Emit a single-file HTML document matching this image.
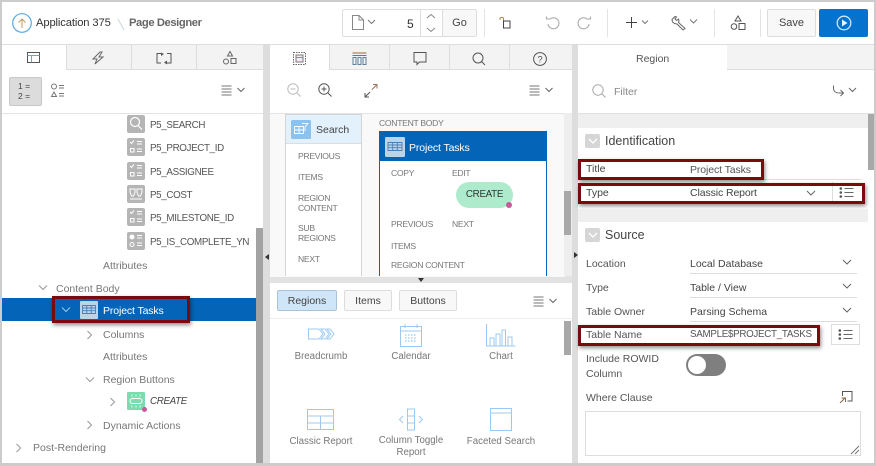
<!DOCTYPE html>
<html><head><meta charset="utf-8"><style>
html,body{margin:0;padding:0;background:#fff}
#r{position:relative;width:876px;height:466px;overflow:hidden;background:#fff;font-family:"Liberation Sans",sans-serif;font-size:10.5px;color:#555}
.a{position:absolute}
.t{position:absolute;white-space:nowrap;line-height:14px}
.box{position:absolute;border:3px solid #7b0a0f;box-shadow:1px 2px 4px rgba(0,0,0,.45);box-sizing:border-box}
svg{position:absolute;overflow:visible}
.g{color:#777}
.p{font-size:9.8px;letter-spacing:-.35px}
.s{font-size:8.6px;letter-spacing:-.3px}
.l{font-size:9.7px;text-align:center;width:102px}
.ul{position:absolute;height:1px;background:#ddd}
.btn{position:absolute;box-sizing:border-box;border:1px solid #ddd;background:#f8f8f8;border-radius:2px;text-align:center;color:#444;font-size:11px}
</style></head><body><div id="r">
<!-- panel backgrounds -->
<div class="a" style="left:0;top:0;width:876px;height:2px;background:#ccc"></div>
<div class="a" style="left:0;top:0;width:2px;height:466px;background:#ccc"></div>
<div class="a" style="left:874px;top:0;width:2px;height:466px;background:#ccc"></div>
<div class="a" style="left:0;top:463px;width:876px;height:3px;background:#ccc"></div>
<div class="a" style="left:2px;top:44px;width:872px;height:1px;background:#ddd"></div>
<!-- splitters -->
<div class="a" style="left:263px;top:45px;width:7px;height:418px;background:#ddd"></div>
<div class="a" style="left:572px;top:45px;width:6px;height:418px;background:#ddd"></div>
<div class="a" style="left:270px;top:276px;width:302px;height:7px;background:#e2e2e2"></div>
<div class="a" style="left:256px;top:228px;width:7px;height:235px;background:#a3a3a3"></div>
<div class="a" style="left:265px;top:254px;border:3px solid transparent;border-right:4px solid #333;border-left:0"></div>
<div class="a" style="left:574px;top:252px;border:3px solid transparent;border-left:4px solid #333;border-right:0"></div>
<div class="a" style="left:418px;top:278px;border:3px solid transparent;border-top:4px solid #333;border-bottom:0"></div>

<!-- header -->
<svg style="left:12px;top:13px" width="20" height="20"><circle cx="10" cy="10" r="9.3" fill="none" stroke="#5aa9e6" stroke-width="1.2"/><path d="M10 15V6M6.500 9.500L10 6l3.500 3.500" fill="none" stroke="#c29a5b" stroke-width="1"/></svg>
<div class="t" style="left:36px;top:16px;font-size:11.2px;color:#333;letter-spacing:-.12px">Application 375</div>
<svg style="left:117px;top:18px" width="8" height="14"><path d="M1 1l6 11" stroke="#c8d4dc" stroke-width="1"/></svg>
<div class="t" style="left:129px;top:16px;font-size:11.2px;color:#666;font-weight:bold;letter-spacing:-.4px">Page Designer</div>

<div class="a" style="left:342px;top:9px;width:101px;height:28px;box-sizing:border-box;border:1px solid #ddd;border-radius:2px 0 0 2px"></div>
<div class="a" style="left:420px;top:9px;width:1px;height:28px;background:#ddd"></div>
<svg style="left:351px;top:15px" width="30" height="16"><path d="M1.500 .5H8l4.500 4.500V14.500H1.500ZM8 .5V5h4.500" fill="none" stroke="#888" stroke-width="1"/><path d="M17 5l3.500 3.500L24 5" fill="none" stroke="#777" stroke-width="1"/></svg>
<div class="t" style="left:407px;top:17px;font-size:12px;color:#333">5</div>
<svg style="left:425px;top:13px" width="12" height="20"><path d="M2 5l4-3.500L10 5M2 15l4 3.500L10 15" fill="none" stroke="#888" stroke-width="1"/></svg>
<div class="btn" style="left:442px;top:9px;width:35px;height:28px;line-height:26px">Go</div>
<div class="a" style="left:484px;top:9px;width:1px;height:28px;background:#e4e4e4"></div>
<svg style="left:499px;top:16px" width="14" height="14"><path d="M1 4V2.500C1 1 4.500 1 4.500 2.500V5" fill="none" stroke="#b8864a" stroke-width="1"/><rect x="4.500" y="5" width="6.500" height="7" fill="none" stroke="#444" stroke-width="1"/></svg>
<svg style="left:545px;top:16px" width="15" height="15"><path d="M3 8a5.500 5.500 0 1 0 2-5H1.500M1.500 .5V3.500" fill="none" stroke="#aaa" stroke-width="1.100"/></svg>
<svg style="left:577px;top:16px" width="15" height="15"><path d="M12 8a5.500 5.500 0 1 1-2-5h3.500M13.500 .5V3.500" fill="none" stroke="#aaa" stroke-width="1.100"/></svg>
<div class="a" style="left:607px;top:9px;width:1px;height:28px;background:#e4e4e4"></div>
<svg style="left:625px;top:16px" width="28" height="14"><path d="M1 6.500H12M6.500 1V12" stroke="#444" stroke-width="1"/><path d="M17 4.500l3 3 3-3" fill="none" stroke="#777" stroke-width="1"/></svg>
<svg style="left:671px;top:15px" width="30" height="16"><path d="M1 4.500L4 1.500 5.500 2 4 4 5.500 5.500 7.500 4 8 6 7.500 7.500 14 13.500 12 15 6 9 3.500 8.500 1.500 7Z" fill="none" stroke="#666" stroke-width="1"/><path d="M19 4.500l3.500 3.500L26 4.500" fill="none" stroke="#777" stroke-width="1"/></svg>
<div class="a" style="left:714px;top:9px;width:1px;height:28px;background:#e4e4e4"></div>
<svg style="left:730px;top:15px" width="16" height="16"><path d="M8 1l3 5H5Z" fill="none" stroke="#555" stroke-width="1"/><circle cx="4" cy="11.500" r="2.800" fill="none" stroke="#555"/><rect x="9" y="8.500" width="6" height="6" fill="none" stroke="#555"/></svg>
<div class="a" style="left:760px;top:9px;width:1px;height:28px;background:#e4e4e4"></div>
<div class="btn" style="left:767px;top:9px;width:49px;height:28px;line-height:26px">Save</div>
<div class="a" style="left:819px;top:9px;width:49px;height:28px;background:#0572ce;border-radius:2px"></div>
<svg style="left:836px;top:15px" width="16" height="16"><circle cx="8" cy="8" r="6.800" fill="none" stroke="#cfe6f8" stroke-width="1.300"/><path d="M6 4.500L11.500 8 6 11.500Z" fill="#e8f3fb"/></svg>

<!-- left tabs -->
<div class="a" style="left:66px;top:45px;width:197px;height:24px;background:#f3f3f3;border-bottom:1px solid #ddd"></div>
<div class="a" style="left:66px;top:45px;width:1px;height:25px;background:#ddd"></div>
<div class="a" style="left:131px;top:45px;width:1px;height:25px;background:#ddd"></div>
<div class="a" style="left:196px;top:45px;width:1px;height:25px;background:#ddd"></div>
<svg style="left:27px;top:52px" width="14" height="12"><rect x=".5" y=".5" width="12" height="10" fill="none" stroke="#555"/><path d="M.5 3.500H12.500M4.500 3.500V10.500" stroke="#7aa0bf" fill="none"/></svg>
<svg style="left:92px;top:51px" width="14" height="14"><path d="M8 1L1 8h4l-2 5 8-7H7l3-5Z" fill="none" stroke="#666" stroke-width="1"/></svg>
<svg style="left:156px;top:52px" width="16" height="13"><path d="M5 1.500H1V11H5M11 1.500H15V11H11" fill="none" stroke="#555"/><path d="M5 .5L8 2 5 4ZM11 8.500L8 10.500 11 12.500Z" fill="#555"/></svg>
<svg style="left:223px;top:51px" width="14" height="14"><path d="M7 .5l2.500 4.500h-5Z" fill="none" stroke="#666"/><circle cx="3" cy="10.500" r="2.500" fill="none" stroke="#666"/><rect x="8" y="7.500" width="5" height="5" fill="none" stroke="#666"/></svg>
<!-- left toolbar -->
<div class="a" style="left:9px;top:77px;width:33px;height:29px;box-sizing:border-box;background:#dcdcdc;border:1px solid #c8c8c8;border-radius:2px"></div>
<div class="t" style="left:18px;top:81px;font-size:8.500px;line-height:10px;color:#444;white-space:pre">1 =<br>2 =</div>
<svg style="left:50px;top:83px" width="15" height="16"><circle cx="4" cy="3.500" r="2.500" fill="none" stroke="#777"/><path d="M4 9l2.500 4.500h-5Z" fill="none" stroke="#777"/><path d="M9 2.500h5M9 5h5M9 10.500h5M9 13h5" stroke="#777"/></svg>
<svg style="left:221px;top:85px" width="26" height="11"><path d="M.5 1h10M.5 4h10M.5 7h10M.5 10h10" stroke="#777"/><path d="M16.500 3l3.500 3.500L23.500 3" fill="none" stroke="#666"/></svg>
<div class="a" style="left:2px;top:113px;width:261px;height:1px;background:#e4e4e4"></div>

<!-- tree items -->
<svg style="left:127px;top:115px" width="18" height="18"><rect width="18" height="18" rx="2" fill="#b5b5b5"/><circle cx="8" cy="7" r="4.500" fill="none" stroke="#fff" stroke-width="1.200"/><path d="M11 10.500l4 4" stroke="#fff" stroke-width="1.200"/></svg>
<div class="t p" style="left:150px;top:119px">P5_SEARCH</div>
<svg style="left:127px;top:138px" width="18" height="18"><rect width="18" height="18" rx="2" fill="#b5b5b5"/><path d="M3 4l1.500 1.500L7 2.500M10 3.500h5M10 6h5M10 11h5M10 13.500h5" stroke="#fff" fill="none"/><rect x="3.500" y="10.500" width="3.500" height="3.500" fill="none" stroke="#fff"/></svg>
<div class="t p" style="left:150px;top:142px">P5_PROJECT_ID</div>
<svg style="left:127px;top:162px" width="18" height="18"><rect width="18" height="18" rx="2" fill="#b5b5b5"/><path d="M3 4l1.500 1.500L7 2.500M10 3.500h5M10 6h5M10 11h5M10 13.500h5" stroke="#fff" fill="none"/><rect x="3.500" y="10.500" width="3.500" height="3.500" fill="none" stroke="#fff"/></svg>
<div class="t p" style="left:150px;top:166px">P5_ASSIGNEE</div>
<svg style="left:127px;top:185px" width="18" height="18"><rect width="18" height="18" rx="2" fill="#b5b5b5"/><path d="M3 4h5v3l-1.500 4h-2L3 7ZM10 4h5v3l-1.500 4h-2L10 7ZM3 14h12" stroke="#fff" fill="none"/></svg>
<div class="t p" style="left:150px;top:189px">P5_COST</div>
<svg style="left:127px;top:208px" width="18" height="18"><rect width="18" height="18" rx="2" fill="#b5b5b5"/><path d="M3 4l1.500 1.500L7 2.500M10 3.500h5M10 6h5M10 11h5M10 13.500h5" stroke="#fff" fill="none"/><rect x="3.500" y="10.500" width="3.500" height="3.500" fill="none" stroke="#fff"/></svg>
<div class="t p" style="left:150px;top:212px">P5_MILESTONE_ID</div>
<svg style="left:127px;top:232px" width="18" height="18"><rect width="18" height="18" rx="2" fill="#b5b5b5"/><circle cx="5" cy="5" r="2.500" fill="#fff"/><circle cx="5" cy="12.500" r="2" fill="none" stroke="#fff"/><path d="M10 3.500h5M10 6h5M10 11h5M10 13.500h5" stroke="#fff"/></svg>
<div class="t p" style="left:150px;top:236px">P5_IS_COMPLETE_YN</div>
<div class="t g" style="left:103px;top:259px">Attributes</div>
<svg style="left:38px;top:284px" width="10" height="8"><path d="M1 1.500l4 4 4-4" fill="none" stroke="#999"/></svg>
<div class="t g" style="left:56px;top:282px">Content Body</div>
<div class="a" style="left:2px;top:298px;width:254px;height:23px;background:#0465b8"></div>
<svg style="left:61px;top:306px" width="10" height="8"><path d="M1 1.500l4 4 4-4" fill="none" stroke="#9cc6ea"/></svg>
<svg style="left:80px;top:301px" width="18" height="18"><rect width="18" height="18" rx="1" fill="#bcd4ea"/><path d="M2.500 4.500h13v8h-13ZM2.500 7h13M2.500 9.700h13M6.800 4.500v8M11.200 4.500v8" fill="none" stroke="#4a7fb8" stroke-width=".9"/></svg>
<div class="t" style="left:103px;top:304px;color:#fff;font-size:10.500px;letter-spacing:-.12px">Project Tasks</div>
<div class="box" style="left:52px;top:296px;width:138px;height:27px"></div>
<svg style="left:86px;top:330px" width="8" height="10"><path d="M1.500 1l4 4-4 4" fill="none" stroke="#999"/></svg>
<div class="t g" style="left:103px;top:328px">Columns</div>
<div class="t g" style="left:103px;top:350px">Attributes</div>
<svg style="left:85px;top:376px" width="10" height="8"><path d="M1 1.500l4 4 4-4" fill="none" stroke="#999"/></svg>
<div class="t g" style="left:103px;top:373px">Region Buttons</div>
<svg style="left:109px;top:397px" width="8" height="10"><path d="M1.500 1l4 4-4 4" fill="none" stroke="#999"/></svg>
<svg style="left:127px;top:392px" width="20" height="20"><rect width="18" height="18" rx="1" fill="#7ddbb0"/><rect x="3" y="6.500" width="12" height="5" rx="2.500" fill="none" stroke="#fff"/><path d="M5 2.500v2M9 2.500v2M13 2.500v2M5 13.500v2M9 13.500v2M13 13.500v2" stroke="#fff" stroke-width=".8"/><circle cx="17.500" cy="17.500" r="2.500" fill="#c9599b"/></svg>
<div class="t p" style="left:150px;top:395px;font-style:italic;color:#444">CREATE</div>
<svg style="left:86px;top:420px" width="8" height="10"><path d="M1.500 1l4 4-4 4" fill="none" stroke="#999"/></svg>
<div class="t g" style="left:103px;top:419px">Dynamic Actions</div>
<svg style="left:15px;top:443px" width="8" height="10"><path d="M1.500 1l4 4-4 4" fill="none" stroke="#999"/></svg>
<div class="t g" style="left:33px;top:441px">Post-Rendering</div>

<!-- middle tabs -->
<div class="a" style="left:329px;top:45px;width:243px;height:24px;background:#f3f3f3;border-bottom:1px solid #ddd"></div>
<div class="a" style="left:329px;top:45px;width:1px;height:25px;background:#ddd"></div>
<div class="a" style="left:389px;top:45px;width:1px;height:25px;background:#ddd"></div>
<div class="a" style="left:449px;top:45px;width:1px;height:25px;background:#ddd"></div>
<div class="a" style="left:509px;top:45px;width:1px;height:25px;background:#ddd"></div>
<svg style="left:293px;top:52px" width="14" height="14"><rect x=".5" y=".5" width="12" height="12" fill="none" stroke="#666" stroke-dasharray="1.500 1"/><rect x="3" y="3" width="7" height="7" fill="#eee" stroke="#777"/><path d="M3 5.500h7" stroke="#b0884f"/></svg>
<svg style="left:352px;top:52px" width="15" height="13"><path d="M.5 1h14M.5 3.500h14" stroke="#9a6b3c"/><path d="M1 5.500h3v7H1ZM6 5.500h3v7H6ZM11 5.500h3v7H11Z" fill="none" stroke="#5f7f9a"/></svg>
<svg style="left:413px;top:52px" width="14" height="14"><path d="M1 .5H13V10H6.500L4 12.500V10H1Z" fill="none" stroke="#555"/></svg>
<svg style="left:472px;top:52px" width="15" height="14"><circle cx="6" cy="6" r="5" fill="none" stroke="#555"/><path d="M9.500 9.500l3.500 3.500" stroke="#555"/></svg>
<svg style="left:533px;top:52px" width="15" height="15"><circle cx="7" cy="7" r="6.400" fill="none" stroke="#555"/><text x="7" y="10.500" font-size="9.500" text-anchor="middle" fill="#555" font-family="Liberation Sans">?</text></svg>
<!-- mid toolbar -->
<svg style="left:287px;top:83px" width="15" height="15"><circle cx="6" cy="6" r="5.200" fill="none" stroke="#bbb"/><path d="M3.500 6h5M10 10l3.500 3.500" stroke="#bbb"/></svg>
<svg style="left:318px;top:83px" width="15" height="15"><circle cx="6" cy="6" r="5.200" fill="none" stroke="#555"/><path d="M3.500 6h5M6 3.500v5M10 10l3.500 3.500" stroke="#555"/></svg>
<svg style="left:364px;top:84px" width="14" height="14"><path d="M8 5.500L13 .5M9 .5h4v4" fill="none" stroke="#a0705a"/><path d="M6 8l-5 5M1 9v4h4" fill="none" stroke="#555"/></svg>
<svg style="left:529px;top:85px" width="26" height="11"><path d="M.5 1h10M.5 4h10M.5 7h10M.5 10h10" stroke="#777"/><path d="M16.500 3l3.500 3.500L23.500 3" fill="none" stroke="#666"/></svg>
<!-- canvas -->
<div class="a" style="left:270px;top:113px;width:295px;height:164px;background:#f9f9f9;border-top:1px solid #e4e4e4;box-sizing:border-box"></div>
<div class="a" style="left:564px;top:113px;width:8px;height:163px;background:#eee"></div>
<div class="a" style="left:564px;top:191px;width:7px;height:44px;background:#a8a8a8"></div>
<div class="a" style="left:285px;top:114px;width:77px;height:162px;box-sizing:border-box;border:1px solid #d4d4d4;border-bottom:0;background:#fff"></div>
<div class="a" style="left:286px;top:115px;width:75px;height:28px;background:#e3f1fc;border-bottom:1px solid #ddd"></div>
<svg style="left:291px;top:120px" width="20" height="19"><rect width="20" height="19" rx="1.500" fill="#8cc2ee"/><path d="M3.500 6.500h9v7h-9ZM3.500 10h9M8 6.500v7M11 3.500h6l-3 3.500v4" fill="none" stroke="#fff" stroke-width=".9"/></svg>
<div class="t" style="left:316px;top:123px;color:#444">Search</div>
<div class="t g s" style="left:298px;top:149px">PREVIOUS</div>
<div class="t g s" style="left:298px;top:170px">ITEMS</div>
<div class="t g s" style="left:298px;top:193px;line-height:10px">REGION<br>CONTENT</div>
<div class="t g s" style="left:298px;top:223px;line-height:10px">SUB<br>REGIONS</div>
<div class="t g s" style="left:298px;top:252px">NEXT</div>
<div class="t g s" style="left:379px;top:116px">CONTENT BODY</div>
<div class="a" style="left:379px;top:131px;width:168px;height:145px;box-sizing:border-box;border:1px solid #0465b8;border-bottom:0;background:#fff"></div>
<div class="a" style="left:379px;top:131px;width:168px;height:30px;background:#0465b8;border-radius:2px 2px 0 0"></div>
<svg style="left:385px;top:137px" width="20" height="20"><rect width="20" height="20" rx="1.500" fill="#bcd4ea"/><path d="M3 5.500h14v8H3ZM3 8h14M3 10.700h14M7.700 5.500v8M12.300 5.500v8" fill="none" stroke="#4a7fb8" stroke-width=".9"/></svg>
<div class="t" style="left:409px;top:141px;color:#fff;font-size:10.500px;letter-spacing:-.12px">Project Tasks</div>
<div class="t g s" style="left:391px;top:166px">COPY</div>
<div class="t g s" style="left:452px;top:166px">EDIT</div>
<div class="a" style="left:456px;top:182px;width:57px;height:26px;background:#aeebcd;border-radius:13px;text-align:center;line-height:26px;color:#333;font-size:9.800px;letter-spacing:-.3px">CREATE</div>
<div class="a" style="left:506px;top:202px;width:6px;height:6px;background:#c9599b;border-radius:50%"></div>
<div class="t g s" style="left:391px;top:217px">PREVIOUS</div>
<div class="t g s" style="left:452px;top:217px">NEXT</div>
<div class="t g s" style="left:391px;top:239px">ITEMS</div>
<div class="t g s" style="left:391px;top:258px">REGION CONTENT</div>
<!-- gallery -->
<div class="btn" style="left:277px;top:290px;width:60px;height:21px;line-height:20px;background:#cfe5f8;border-color:#a9c4da;font-size:10.500px">Regions</div>
<div class="btn" style="left:344px;top:290px;width:48px;height:21px;line-height:20px;font-size:10.500px">Items</div>
<div class="btn" style="left:399px;top:290px;width:58px;height:21px;line-height:20px;font-size:10.500px">Buttons</div>
<svg style="left:533px;top:296px" width="26" height="11"><path d="M.5 1h10M.5 4h10M.5 7h10M.5 10h10" stroke="#777"/><path d="M16.500 3l3.500 3.500L23.500 3" fill="none" stroke="#666"/></svg>
<div class="a" style="left:270px;top:318px;width:302px;height:1px;background:#eee"></div>
<div class="a" style="left:564px;top:321px;width:7px;height:34px;background:#a8a8a8"></div>
<svg style="left:307px;top:328px" width="28" height="12"><path d="M1.500 1H12L16 6 12 11H1.500ZM14 1h4l4 5-4 5h-4l4-5ZM20 1h3l4 5-4 5h-3l4-5Z" fill="none" stroke="#9cc9f2"/></svg>
<div class="t g l" style="left:270px;top:350px">Breadcrumb</div>
<svg style="left:400px;top:323px" width="22" height="24"><path d="M.5 3.500h21v20H.5ZM.5 8h21M5 1v4M17 1v4" fill="none" stroke="#9cc9f2"/><path d="M5 12h12M5 15h12M5 18h12" stroke="#9cc9f2" stroke-width="1.300" stroke-dasharray="1.500 1.500"/></svg>
<div class="t g l" style="left:360px;top:350px">Calendar</div>
<svg style="left:486px;top:323px" width="30" height="24"><path d="M.5 1v22H29.500M4 23v-8h4v8M10 23V11h4v12M16 23V7h3.500v16M22 23V14h4v9" fill="none" stroke="#9cc9f2"/></svg>
<div class="t g l" style="left:450px;top:350px">Chart</div>
<svg style="left:307px;top:409px" width="27" height="21"><path d="M.5.5h26v20H.5ZM.5 7h26M.5 14h26M13.500 7v13.500" fill="none" stroke="#9cc9f2"/></svg>
<div class="t g l" style="left:270px;top:435px">Classic Report</div>
<svg style="left:398px;top:408px" width="26" height="23"><path d="M9.500 1h7v21h-7ZM9.500 8h7M9.500 15h7M5 8l-3.500 3.500L5 15M21 8l3.500 3.500L21 15" fill="none" stroke="#9cc9f2"/></svg>
<div class="t g l" style="left:360px;top:435px;line-height:12px">Column Toggle<br>Report</div>
<svg style="left:490px;top:408px" width="22" height="23"><path d="M.5.5h21v22H.5ZM.5 5h21" fill="none" stroke="#9cc9f2"/></svg>
<div class="t g l" style="left:450px;top:435px">Faceted Search</div>

<!-- right panel -->
<div class="a" style="left:727px;top:45px;width:147px;height:24px;background:#f3f3f3;border-bottom:1px solid #ddd"></div>
<div class="t" style="left:636px;top:52px;font-size:10.500px">Region</div>
<svg style="left:592px;top:84px" width="15" height="15"><circle cx="6" cy="6" r="5.200" fill="none" stroke="#aaa"/><path d="M10 10l3.500 3.500" stroke="#aaa"/></svg>
<div class="t" style="left:614px;top:85px;color:#888">Filter</div>
<svg style="left:832px;top:85px" width="26" height="12"><path d="M1.500 .5V3C1.500 7 4 8 8 8h3M8.500 5l3 3-3 3" fill="none" stroke="#666"/><path d="M17 3l3.500 3.500L24 3" fill="none" stroke="#666"/></svg>
<div class="a" style="left:578px;top:113px;width:296px;height:1px;background:#e0e0e0"></div>
<div class="a" style="left:578px;top:114px;width:290px;height:14px;background:#efefef"></div>
<div class="a" style="left:868px;top:114px;width:6px;height:56px;background:#a8a8a8"></div>
<div class="a" style="left:585px;top:134px;width:15px;height:14px;background:#d6d6d6;border-radius:2px"></div>
<svg style="left:588px;top:138px" width="10" height="7"><path d="M1 1l4 4 4-4" fill="none" stroke="#fff" stroke-width="1.300"/></svg>
<div class="t" style="left:605px;top:134px;font-size:12.500px;color:#444">Identification</div>
<div class="t" style="left:586px;top:162px;color:#444">Title</div>
<div class="t" style="left:690px;top:163px;color:#555;letter-spacing:-.1px">Project Tasks</div>
<div class="ul" style="left:690px;top:179px;width:171px"></div>
<div class="t" style="left:586px;top:186px;color:#444">Type</div>
<div class="t" style="left:690px;top:186px;color:#444;letter-spacing:-.1px">Classic Report</div>
<svg style="left:806px;top:190px" width="10" height="7"><path d="M1 1l4 4 4-4" fill="none" stroke="#666"/></svg>
<div class="a" style="left:832px;top:182px;width:1px;height:21px;background:#ddd"></div>
<svg style="left:839px;top:187px" width="16" height="12"><path d="M5.500 1.500h9M5.500 5.500h9M5.500 9.500h9" stroke="#666"/><circle cx="1.800" cy="1.500" r="1.300" fill="#555"/><circle cx="1.800" cy="5.500" r="1.300" fill="#555"/><circle cx="1.800" cy="9.500" r="1.300" fill="#555"/></svg>
<div class="box" style="left:578px;top:159px;width:186px;height:21px"></div>
<div class="box" style="left:578px;top:183px;width:287px;height:21px"></div>
<div class="a" style="left:578px;top:209px;width:290px;height:13px;background:#efefef"></div>
<div class="a" style="left:585px;top:228px;width:15px;height:14px;background:#d6d6d6;border-radius:2px"></div>
<svg style="left:588px;top:232px" width="10" height="7"><path d="M1 1l4 4 4-4" fill="none" stroke="#fff" stroke-width="1.300"/></svg>
<div class="t" style="left:605px;top:228px;font-size:12.500px;color:#444">Source</div>
<div class="t" style="left:586px;top:257px;color:#555">Location</div>
<div class="t" style="left:690px;top:257px;color:#444">Local Database</div>
<svg style="left:842px;top:259px" width="10" height="7"><path d="M1 1l4 4 4-4" fill="none" stroke="#666"/></svg>
<div class="ul" style="left:690px;top:273px;width:167px"></div>
<div class="t" style="left:586px;top:281px;color:#555">Type</div>
<div class="t" style="left:690px;top:281px;color:#444">Table / View</div>
<svg style="left:842px;top:283px" width="10" height="7"><path d="M1 1l4 4 4-4" fill="none" stroke="#666"/></svg>
<div class="ul" style="left:690px;top:297px;width:167px"></div>
<div class="t" style="left:586px;top:305px;color:#555">Table Owner</div>
<div class="t" style="left:690px;top:305px;color:#444">Parsing Schema</div>
<svg style="left:842px;top:307px" width="10" height="7"><path d="M1 1l4 4 4-4" fill="none" stroke="#666"/></svg>
<div class="ul" style="left:690px;top:321px;width:167px"></div>
<div class="a" style="left:831px;top:324px;width:29px;height:21px;box-sizing:border-box;border:1px solid #ddd"></div>
<svg style="left:838px;top:329px" width="16" height="12"><path d="M5.500 1.500h9M5.500 5.500h9M5.500 9.500h9" stroke="#666"/><circle cx="1.800" cy="1.500" r="1.300" fill="#555"/><circle cx="1.800" cy="5.500" r="1.300" fill="#555"/><circle cx="1.800" cy="9.500" r="1.300" fill="#555"/></svg>
<div class="box" style="left:578px;top:325px;width:242px;height:21px"></div>
<div class="t" style="left:586px;top:328px;color:#555">Table Name</div>
<div class="t p" style="left:690px;top:328px;letter-spacing:-.3px">SAMPLE$PROJECT_TASKS</div>
<div class="t" style="left:586px;top:352px;color:#555;line-height:15px">Include ROWID<br>Column</div>
<div class="a" style="left:686px;top:354px;width:40px;height:22px;background:#7f7f7f;border-radius:11px"></div>
<div class="a" style="left:688px;top:356px;width:18px;height:18px;background:#fff;border-radius:50%"></div>
<div class="t" style="left:586px;top:391px;color:#555">Where Clause</div>
<svg style="left:839px;top:391px" width="14" height="13"><path d="M3.500 5V.5H13V10H8.500" fill="none" stroke="#555"/><path d="M1 12l5-5M2.500 7H6.500V11" fill="none" stroke="#8a6a4a"/></svg>
<div class="a" style="left:585px;top:411px;width:276px;height:45px;box-sizing:border-box;border:1px solid #ddd;background:#fff"></div>
<svg style="left:850px;top:445px" width="10" height="10"><path d="M1 9L9 1M5 9l4-4" stroke="#777"/></svg>
</div></body></html>
